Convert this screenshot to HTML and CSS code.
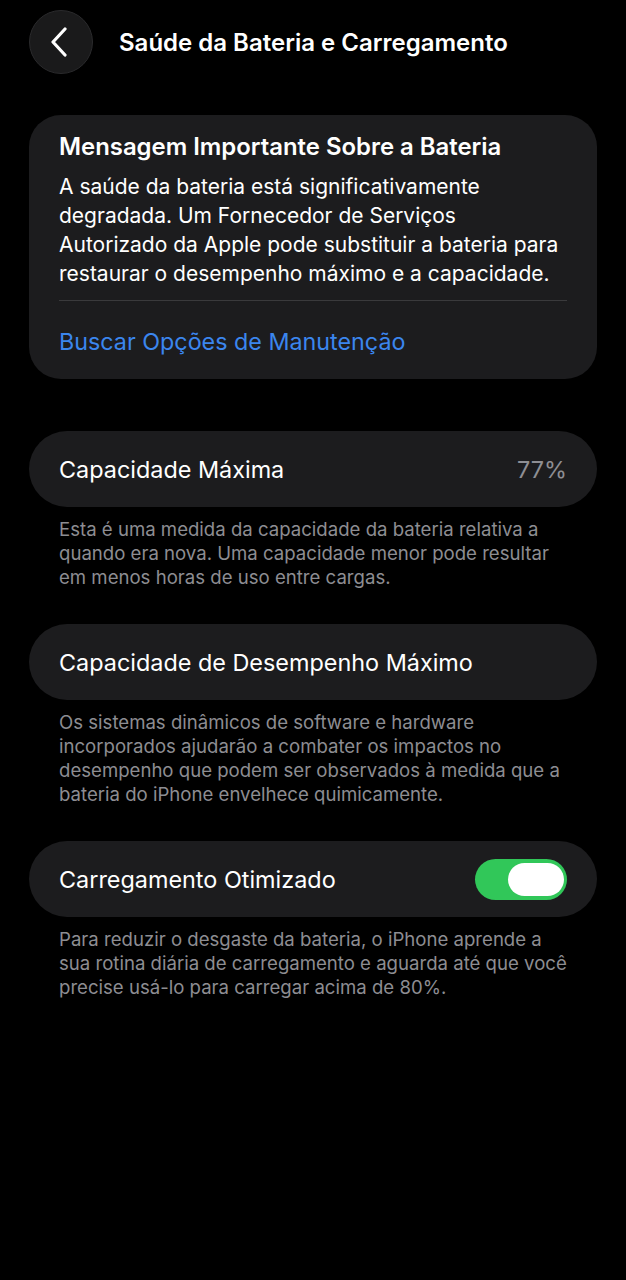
FILE: index.html
```html
<!DOCTYPE html>
<html lang="pt-BR">
<head>
<meta charset="utf-8">
<title>Saúde da Bateria e Carregamento</title>
<link rel="stylesheet" href="styles.css">
</head>
<body>
<div class="screen">
  <header class="nav">
    <button class="back" aria-label="Voltar">
      <svg width="18" height="30" viewBox="0 0 18 30"><path d="M15 2 L3 15 L15 28" fill="none" stroke="#fff" stroke-width="3.2" stroke-linecap="round" stroke-linejoin="round"/></svg>
    </button>
    <h1 class="nav-title">Saúde da Bateria e Carregamento</h1>
  </header>

  <section class="card message">
    <h2 class="msg-title">Mensagem Importante Sobre a Bateria</h2>
    <p class="msg-body">A saúde da bateria está significativamente degradada. Um Fornecedor de Serviços Autorizado da Apple pode substituir a bateria para restaurar o desempenho máximo e a capacidade.</p>
    <div class="divider"></div>
    <a class="link">Buscar Opções de Manutenção</a>
  </section>

  <section class="group first">
    <div class="card row">
      <span class="row-label">Capacidade Máxima</span>
      <span class="row-value">77%</span>
    </div>
    <p class="footnote">Esta é uma medida da capacidade da bateria relativa a quando era nova. Uma capacidade menor pode resultar em menos horas de uso entre cargas.</p>
  </section>

  <section class="group">
    <div class="card row">
      <span class="row-label">Capacidade de Desempenho Máximo</span>
    </div>
    <p class="footnote">Os sistemas dinâmicos de software e hardware incorporados ajudarão a combater os impactos no desempenho que podem ser observados à medida que a bateria do iPhone envelhece quimicamente.</p>
  </section>

  <section class="group">
    <div class="card row">
      <span class="row-label">Carregamento Otimizado</span>
      <span class="toggle"><span class="knob"></span></span>
    </div>
    <p class="footnote">Para reduzir o desgaste da bateria, o iPhone aprende a sua rotina diária de carregamento e aguarda até que você precise usá-lo para carregar acima de 80%.</p>
  </section>
</div>
</body>
</html>
```

FILE: styles.css
```css
* { box-sizing: border-box; }
html, body {
  margin: 0;
  padding: 0;
  background: #000;
}
body {
  font-family: Inter, Roboto, "Noto Sans", "Liberation Sans", sans-serif;
  color: #fff;
  width: 626px;
  min-height: 1280px;
}
.screen {
  padding: 10px 29px 40px 29px;
}
.nav {
  display: flex;
  align-items: center;
  gap: 26px;
  height: 64px;
}
.back {
  width: 64px;
  height: 64px;
  border-radius: 50%;
  background: #1a1a1b;
  border: 1px solid #2a2a2c;
  display: flex;
  align-items: center;
  justify-content: center;
  padding: 0 4px 0 0;
  flex-shrink: 0;
}
.nav-title {
  margin: 0;
  font-size: 24px;
  font-weight: 600;
}
.card {
  background: #1c1c1e;
}
.message {
  margin-top: 41px;
  border-radius: 32px;
  padding: 17px 30px 23px 30px;
}
.msg-title {
  margin: 0;
  font-size: 23.9px;
  font-weight: 600;
  line-height: 29px;
}
.msg-body {
  margin: 11px 0 0 0;
  font-size: 21px;
  line-height: 29px;
  color: #fff;
}
.divider {
  height: 1px;
  background: #3a3a3c;
  margin-top: 12px;
}
.link {
  display: block;
  margin-top: 26px;
  font-size: 23.3px;
  line-height: 29px;
  color: #3b86ee;
}
.group { margin-top: 35px; }
.group.first { margin-top: 52px; }
.row {
  height: 76px;
  border-radius: 38px;
  padding: 0 30px;
  display: flex;
  align-items: center;
  justify-content: space-between;
}
.row-label {
  font-size: 23.4px;
}
.row-value {
  font-size: 23.4px;
  color: #8e8e93;
}
.footnote {
  margin: 10px 0 0 0;
  padding: 0 30px;
  font-size: 18.6px;
  line-height: 24px;
  color: #8d8d92;
}
.toggle {
  width: 92px;
  height: 41px;
  border-radius: 21px;
  background: #31c759;
  display: flex;
  align-items: center;
  justify-content: flex-end;
  padding-right: 3px;
}
.knob {
  width: 56px;
  height: 33px;
  border-radius: 17px;
  background: #fff;
}
```
